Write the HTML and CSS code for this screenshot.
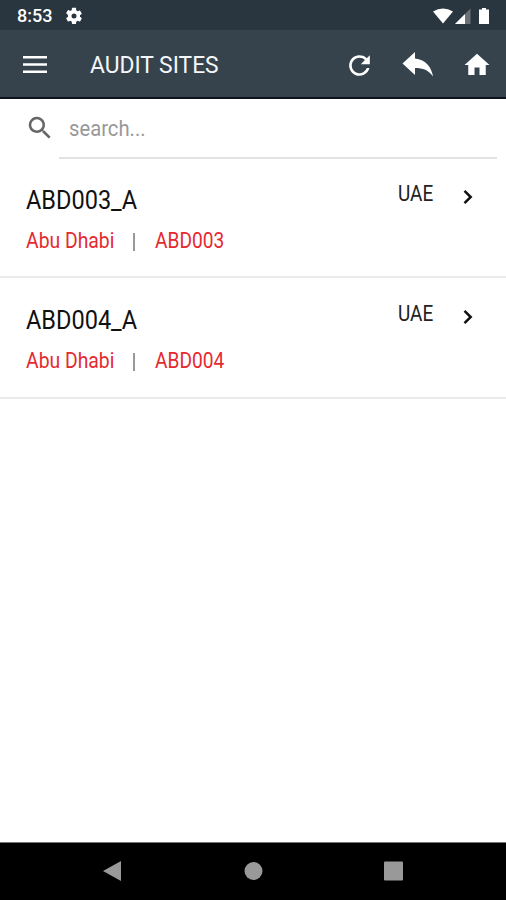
FILE: index.html
```html
<!DOCTYPE html>
<html lang="en">
<head>
<meta charset="utf-8" />
<title>Audit Sites</title>
<link rel="stylesheet" href="styles.css">
</head>
<body>
<div id="container">
    <div class="status">
        <span class="time">8:53</span>
        <svg class="gear" width="20" height="20" viewBox="0 0 24 24"><path d="M19.14 12.94c.04-.3.06-.61.06-.94s-.02-.64-.07-.94l2.03-1.58a.49.49 0 0 0 .12-.61l-1.92-3.32a.49.49 0 0 0-.59-.22l-2.39.96a7 7 0 0 0-1.62-.94l-.36-2.54A.48.48 0 0 0 13.92 2h-3.84a.48.48 0 0 0-.48.41l-.36 2.54c-.59.24-1.13.57-1.62.94l-2.39-.96a.49.49 0 0 0-.59.22L2.72 8.47a.48.48 0 0 0 .12.61l2.03 1.58a7.4 7.4 0 0 0 0 2.28l-2.03 1.58a.49.49 0 0 0-.12.61l1.92 3.32c.12.22.37.29.59.22l2.39-.96c.5.38 1.03.7 1.62.94l.36 2.54c.05.24.24.41.48.41h3.84c.24 0 .44-.17.47-.41l.36-2.54c.59-.24 1.13-.56 1.62-.94l2.39.96c.22.08.47 0 .59-.22l1.92-3.32a.48.48 0 0 0-.12-.61zM12 15a3 3 0 1 1 0-6 3 3 0 0 1 0 6z"/></svg>
        <svg class="signal" width="62" height="20" viewBox="0 0 62 20">
            <path d="M1 5.500Q11-.5 21 5.500L11 17.500z"/>
            <path d="M23 18L38.500 2.500V18z" opacity=".3"/>
            <path d="M23 18L33 8V18z"/>
            <path d="M47 3.500h3V2h4v1.500h3V18H47z"/>
        </svg>
    </div>
    <div class="header">
        <svg class="menu" width="24" height="18" viewBox="0 0 24 18"><path d="M0 0h24v2.600H0zM0 7.200h24v2.600H0zM0 14.500h24v2.600H0z"/></svg>
        <h1><span>AUDIT SITES</span></h1>
        <svg class="refresh" width="31" height="31" viewBox="0 0 24 24"><path d="M17.65 6.350A8 8 0 1 0 19.730 14h-2.080A6 6 0 1 1 12 6c1.660 0 3.140.690 4.220 1.780L13 11h7V4z"/></svg>
        <svg class="back" width="32" height="26" viewBox="0 0 32 26"><path d="M13 0v6.500C24 8 29.500 15 31 24.500 26.500 18 21 16 13 16v7L.500 11.500z"/></svg>
        <svg class="home" width="30" height="30" viewBox="0 0 24 24"><path d="M10 20v-6h4v6h5v-8h3L12 3 2 12h3v8z"/></svg>
    </div>
    <div class="search">
        <svg width="30" height="30" viewBox="0 0 24 24"><path d="M15.500 14h-.790l-.280-.270A6.500 6.500 0 1 0 13.730 14.430l.270.280v.790l5 4.990L20.490 19zm-6 0a4.500 4.500 0 1 1 0-9 4.500 4.500 0 0 1 0 9z"/></svg>
        <div class="field"><span>search...</span></div>
    </div>
    <div class="list">
        <div class="item">
            <div class="info">
                <h2><span>ABD003_A</span></h2>
                <p><span class="city">Abu Dhabi</span><i></i><span class="code">ABD003</span></p>
            </div>
            <span class="country">UAE</span>
            <svg class="arrow" width="10" height="16" viewBox="0 0 10 16"><path d="M1.500 1.800L7.700 8l-6.200 6.200"/></svg>
        </div>
        <div class="item">
            <div class="info">
                <h2><span>ABD004_A</span></h2>
                <p><span class="city">Abu Dhabi</span><i></i><span class="code">ABD004</span></p>
            </div>
            <span class="country">UAE</span>
            <svg class="arrow" width="10" height="16" viewBox="0 0 10 16"><path d="M1.500 1.800L7.700 8l-6.200 6.200"/></svg>
        </div>
    </div>
    <div class="nav">
        <svg width="20" height="22" viewBox="0 0 20 22"><path d="M0 11L18 1v20z"/></svg>
        <svg width="20" height="22" viewBox="0 0 20 22"><circle cx="10.500" cy="11" r="9"/></svg>
        <svg width="20" height="22" viewBox="0 0 20 22"><rect x="1" y="1.500" width="19" height="19" rx="1"/></svg>
    </div>
</div>
</body>
</html>
```
FILE: styles.css
```css
*{ margin: 0; padding: 0; box-sizing: border-box;}
body { font-family: Roboto, "Liberation Sans", sans-serif; background: #fff;}
svg { display: block; flex: none; fill: #fff;}
#container { width: 506px; height: 900px; display: flex; flex-direction: column; overflow: hidden;}
/* narrow letters */
h1 span, h2 span, .field span, .city, .code, .country { display: block; white-space: nowrap; transform-origin: 0 50%;}

.status { height: 30px; background: #2a363f; display: flex; align-items: center; padding: 1px 12px 0 17px; color: #fff;}
.time { width: 47px; font-size: 18px; font-weight: 500; line-height: 30px;}
.signal { margin-left: auto;}

.header { height: 69px; background: #36434d; border-bottom: 2px solid #10121f; display: flex; align-items: center; padding: 3px 14px 0 23px;}
.menu { margin-right: 43px;}
h1 { flex: 1; font-size: 24px; font-weight: 400; line-height: 32px; color: #f4f6fa;}
h1 span { transform: scaleX(.95);}
.back { margin: 0 28px 0 27px;}
.home { margin-top: -1px;}

.search { height: 60px; display: flex; padding: 0 9px 0 25px;}
.search svg { fill: #666; margin: 14px 4px 0 0;}
.field { flex: 1; height: 60px; padding: 0 10px; border-bottom: 2px solid #e2e2e2; font-size: 22px; line-height: 60px; color: #999;}
.field span { transform: scaleX(.92);}

.list { flex: 1;}
.item { height: 121px; display: flex; align-items: flex-start; padding: 23px 33px 0 26px; border-bottom: 2px solid #ebebeb;}
.item:first-child { height: 119px; padding-top: 22px;}
.info { flex: 1;}
h2 { margin: -1px 0 1px; font-size: 26px; font-weight: 400; line-height: 40px; color: #111;}
h2 span { transform: scaleX(.905);}
.info p { display: flex; align-items: center; font-size: 22px; line-height: 40px; color: #e52a30;}
.city { width: 107px; transform: scaleX(.88);}
.code { transform: scaleX(.87);}
.info i { width: 2px; height: 18px; margin: 2px 20px 0 0; background: #999;}
.country { width: 65px; font-size: 22px; line-height: 26px; color: #222; transform: scaleX(.86);}
.arrow { margin-top: 8px; fill: none; stroke: #111; stroke-width: 2.5;}

.nav { height: 58px; background: #000; border-top: 1px solid #777; display: flex; justify-content: space-between; padding: 17px 103px 0;}
.nav svg { fill: #999;}
```
